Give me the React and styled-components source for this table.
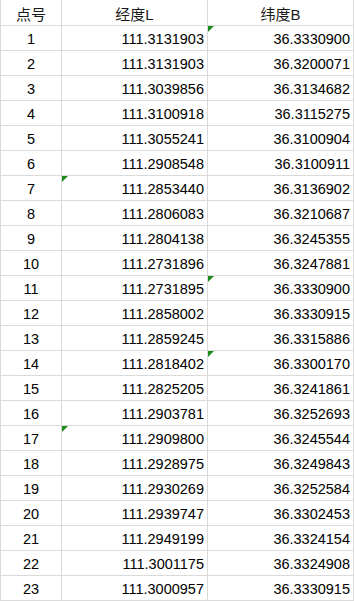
import React from 'react'
import styled, { createGlobalStyle } from 'styled-components'

const GlobalStyle = createGlobalStyle`
  html, body {
    margin: 0;
    padding: 0;
    background: #fff;
  }
  * {
    box-sizing: border-box;
  }
`

const Sheet = styled.div`
  display: grid;
  grid-template-columns: 61px 146px 146px;
  width: 354px;
  border-left: 1px solid #dadada;
  font-family: "Liberation Sans", "Noto Sans CJK SC", sans-serif;
  font-size: 14.5px;
  color: #000;
`

const HeadCell = styled.div`
  height: 26px;
  display: flex;
  align-items: center;
  justify-content: center;
  border-right: 1px solid #dadada;
  border-bottom: 1px solid #dadada;
  font-size: 15px;
  color: #1a1a1a;
  padding-top: 1px;
`

const Cell = styled.div`
  position: relative;
  height: 25px;
  display: flex;
  align-items: center;
  justify-content: ${props => (props.center ? 'center' : 'flex-end')};
  padding: 2px 3px 0 3px;
  border-right: 1px solid #dadada;
  border-bottom: 1px solid #dadada;
  white-space: nowrap;

  &::before {
    content: '';
    display: ${props => (props.flag ? 'block' : 'none')};
    position: absolute;
    top: 0;
    left: 0;
    width: 0;
    height: 0;
    border-top: 6px solid #1e8a1e;
    border-right: 6px solid transparent;
  }
`

const rows = [
  ['1', '111.3131903', '36.3330900', 'B'],
  ['2', '111.3131903', '36.3200071'],
  ['3', '111.3039856', '36.3134682'],
  ['4', '111.3100918', '36.3115275'],
  ['5', '111.3055241', '36.3100904'],
  ['6', '111.2908548', '36.3100911'],
  ['7', '111.2853440', '36.3136902', 'L'],
  ['8', '111.2806083', '36.3210687'],
  ['9', '111.2804138', '36.3245355'],
  ['10', '111.2731896', '36.3247881'],
  ['11', '111.2731895', '36.3330900', 'B'],
  ['12', '111.2858002', '36.3330915'],
  ['13', '111.2859245', '36.3315886'],
  ['14', '111.2818402', '36.3300170', 'B'],
  ['15', '111.2825205', '36.3241861'],
  ['16', '111.2903781', '36.3252693'],
  ['17', '111.2909800', '36.3245544', 'L'],
  ['18', '111.2928975', '36.3249843'],
  ['19', '111.2930269', '36.3252584'],
  ['20', '111.2939747', '36.3302453'],
  ['21', '111.2949199', '36.3324154'],
  ['22', '111.3001175', '36.3324908'],
  ['23', '111.3000957', '36.3330915'],
]

const App = () =>
  <>
    <GlobalStyle />
    <Sheet>
      <HeadCell>点号</HeadCell>
      <HeadCell>经度L</HeadCell>
      <HeadCell>纬度B</HeadCell>
      {rows.map(([no, lon, lat, flag]) =>
        <React.Fragment key={no}>
          <Cell center>{no}</Cell>
          <Cell flag={flag === 'L'}>{lon}</Cell>
          <Cell flag={flag === 'B'}>{lat}</Cell>
        </React.Fragment>
      )}
    </Sheet>
  </>

export default App
